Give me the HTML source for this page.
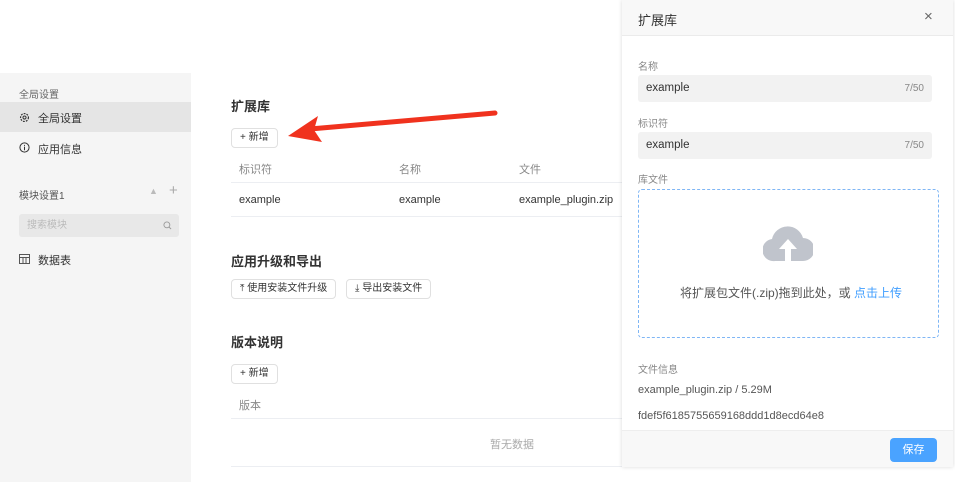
<!DOCTYPE html>
<html><head><meta charset="utf-8"><style>
*{margin:0;padding:0;box-sizing:border-box}
body{width:955px;height:482px;background:#fff;font-family:"Liberation Sans","Noto Sans CJK SC",sans-serif;position:relative;overflow:hidden;color:#333}
.a{position:absolute}
.side{left:0;top:73px;width:191px;height:409px;background:#f5f5f5}
.btn{position:absolute;height:20px;border:1px solid #e0e0e0;border-radius:4px;background:#fff;font-size:10px;color:#333;line-height:18px;padding:0 8px;white-space:nowrap}
.h{font-size:13px;font-weight:bold;color:#333}
.g{color:#888;font-size:11px}
.t{font-size:11px;color:#333}
.line{height:1px;background:#eceef2}
.inp{position:absolute;left:638px;width:294px;height:27px;background:#f2f2f2;border-radius:3px;font-size:11.5px;line-height:27px;padding:0 8px;color:#333}
.inp span{float:right;color:#888;font-size:10px}
</style></head><body>
<div class="a side"></div>
<div class="a g" style="left:19px;top:86px;font-size:10px;color:#666">全局设置</div>
<div class="a" style="left:0;top:102px;width:191px;height:30px;background:#e5e5e5"></div>
<svg class="a" style="left:19px;top:112px" width="11" height="11" viewBox="0 0 12 12"><circle cx="6" cy="6" r="4.3" fill="none" stroke="#333" stroke-width="1.3" stroke-dasharray="2 1.2"/><circle cx="6" cy="6" r="1.7" fill="none" stroke="#333" stroke-width="1.1"/></svg>
<div class="a t" style="left:38px;top:110px">全局设置</div>
<svg class="a" style="left:19px;top:142px" width="11" height="11" viewBox="0 0 12 12"><circle cx="6" cy="6" r="5" fill="none" stroke="#333" stroke-width="1.1"/><path d="M6 5v4M6 3.2v1" stroke="#333" stroke-width="1.1"/></svg>
<div class="a t" style="left:38px;top:141px">应用信息</div>
<div class="a" style="left:19px;top:187px;font-size:10px;color:#555">模块设置1</div>
<div class="a" style="left:149px;top:186px;font-size:9px;color:#bbb">▲</div>
<div class="a" style="left:169px;top:182px;font-size:15px;color:#aaa">+</div>
<div class="a" style="left:19px;top:214px;width:160px;height:23px;background:#e8e8e8;border-radius:3px;font-size:10px;color:#bbb;line-height:23px;padding-left:8px">搜索模块</div>
<svg class="a" style="left:163px;top:221px" width="9" height="9" viewBox="0 0 10 10"><circle cx="4.3" cy="4.3" r="3.3" fill="none" stroke="#999" stroke-width="1"/><path d="M6.8 6.8L9 9" stroke="#999"/></svg>
<svg class="a" style="left:19px;top:254px" width="11" height="10" viewBox="0 0 11 10"><rect x=".5" y=".5" width="10" height="9" fill="none" stroke="#555"/><path d="M.5 3.5h10M4 3.5v6M7 3.5v6" stroke="#555"/></svg>
<div class="a t" style="left:38px;top:252px">数据表</div>

<div class="a h" style="left:231px;top:96px">扩展库</div>
<div class="btn" style="left:231px;top:128px">+ 新增</div>
<div class="a g" style="left:239px;top:161px">标识符</div>
<div class="a g" style="left:399px;top:161px">名称</div>
<div class="a g" style="left:519px;top:161px">文件</div>
<div class="a line" style="left:231px;top:182px;width:392px"></div>
<div class="a t" style="left:239px;top:194px">example</div>
<div class="a t" style="left:399px;top:194px">example</div>
<div class="a t" style="left:519px;top:194px">example_plugin.zip</div>
<div class="a line" style="left:231px;top:216px;width:392px"></div>
<svg class="a" style="left:280px;top:108px" width="220" height="40" viewBox="0 0 220 40"><path d="M215 5 L30 21" stroke="#f0321e" stroke-width="5" stroke-linecap="round"/><path d="M8 28 L38 8 L34 22 L42 34 Z" fill="#f0321e"/></svg>

<div class="a h" style="left:231px;top:251px">应用升级和导出</div>
<div class="btn" style="left:231px;top:279px">⤒ 使用安装文件升级</div>
<div class="btn" style="left:346px;top:279px">⤓ 导出安装文件</div>
<div class="a h" style="left:231px;top:332px">版本说明</div>
<div class="btn" style="left:231px;top:364px">+ 新增</div>
<div class="a g" style="left:239px;top:397px">版本</div>
<div class="a line" style="left:231px;top:418px;width:392px"></div>
<div class="a g" style="left:490px;top:436px;color:#aaa">暂无数据</div>
<div class="a line" style="left:231px;top:466px;width:392px"></div>

<div class="a" style="left:622px;top:0;width:331px;height:467px;background:#fff;box-shadow:0 0 4px rgba(0,0,0,.15);border-bottom:1px solid #888"></div>
<div class="a" style="left:622px;top:0;width:331px;height:36px;background:#f8f8f8;border-bottom:1px solid #ebebeb"></div>
<div class="a" style="left:638px;top:10px;font-size:13px;color:#333">扩展库</div>
<div class="a" style="left:924px;top:8px;font-size:15px;color:#666">×</div>
<div class="a g" style="left:638px;top:58px;font-size:10px">名称</div>
<div class="inp" style="top:75px">example<span>7/50</span></div>
<div class="a g" style="left:638px;top:115px;font-size:10px">标识符</div>
<div class="inp" style="top:132px">example<span>7/50</span></div>
<div class="a g" style="left:638px;top:171px;font-size:10px">库文件</div>
<div class="a" style="left:638px;top:189px;width:301px;height:149px;border:1px dashed #7fb6f5;border-radius:4px"></div>
<svg class="a" style="left:763px;top:225px" width="50" height="38" viewBox="0 0 50 38"><path d="M12 36 A11 11 0 0 1 9 14 A16 16 0 0 1 40 13 A11 11 0 0 1 40 36 Z" fill="#c0c4cc"/><path d="M25 14 L16 24 H22 V36 H28 V24 H34 Z" fill="#fff"/></svg>
<div class="a" style="left:680px;top:284px;font-size:12px;color:#555">将扩展包文件(.zip)拖到此处，或 <span style="color:#409eff">点击上传</span></div>
<div class="a g" style="left:638px;top:361px;font-size:10px">文件信息</div>
<div class="a t" style="left:638px;top:384px;font-size:11px;color:#555">example_plugin.zip / 5.29M</div>
<div class="a t" style="left:638px;top:410px;font-size:11px;color:#555">fdef5f6185755659168ddd1d8ecd64e8</div>
<div class="a" style="left:622px;top:430px;width:331px;height:37px;background:#f8f8f8;border-top:1px solid #eee"></div>
<div class="a" style="left:890px;top:438px;width:47px;height:24px;background:#4aa3ff;border-radius:4px;color:#fff;font-size:11px;line-height:24px;text-align:center">保存</div>
</body></html>
